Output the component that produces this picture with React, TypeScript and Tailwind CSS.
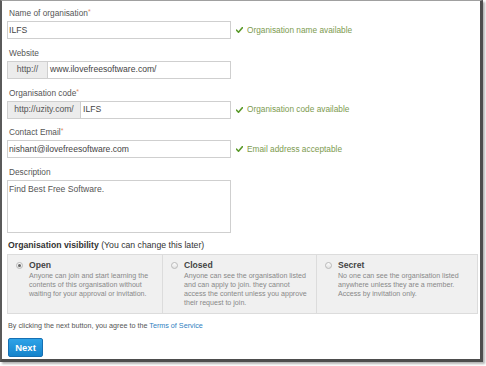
import React from "react";

const Check = () => (
  <svg width="7" height="6" viewBox="0 0 7 6" className="shrink-0">
    <path d="M0.6 3.2 L2.5 5.2 L6.5 0.6" fill="none" stroke="#5b9a2b" strokeWidth="1.6" strokeLinecap="round" strokeLinejoin="round" />
  </svg>
);

const Label = ({ children, req }: { children: React.ReactNode; req?: boolean }) => (
  <div className="h-[12px] leading-[12px] pl-[2px] mb-[2px] text-[8.3px] text-[#555]">
    {children}
    {req && <span className="text-[#e58a5c] text-[7px] align-top leading-[9px]">*</span>}
  </div>
);

const Status = ({ text }: { text: string }) => (
  <div className="flex items-center ml-[5px] gap-[4px]">
    <Check />
    <span className="text-[8.3px] text-[#7d9b4f]">{text}</span>
  </div>
);

const Radio = ({ on }: { on?: boolean }) => (
  <div className="w-[7px] h-[7px] mt-[1.5px] rounded-full border border-[#b9b9b9] bg-gradient-to-b from-[#fdfdfd] to-[#e2e2e2] flex items-center justify-center shrink-0">
    {on && <div className="w-[3px] h-[3px] rounded-full bg-[#666]" />}
  </div>
);

const Option = ({ title, lines, on, border }: { title: string; lines: string[]; on?: boolean; border?: boolean }) => (
  <div className={`flex pl-[8px] pt-[5px] gap-[6px] ${border ? "border-l border-[#dcdcdc]" : ""}`}>
    <Radio on={on} />
    <div>
      <div className="text-[8.6px] font-bold text-[#444] leading-[10px] mb-[2px]">{title}</div>
      {lines.map((l, i) => (
        <div key={i} className="text-[7.1px] text-[#888] leading-[9px] whitespace-nowrap">{l}</div>
      ))}
    </div>
  </div>
);

export default function App() {
  return (
    <div className="w-[486px] h-[366px] bg-white font-['Liberation_Sans',Arial,sans-serif] overflow-hidden">
      <div className="w-[483px] h-[362px] bg-white border-l-2 border-l-[#5a5a5a] border-t border-t-[#a0a0a0] border-r-[3px] border-r-[#4d4d4d] border-b-[3px] border-b-[#4d4d4d] shadow-[2px_2px_2px_rgba(0,0,0,0.3)] pl-[5px] pt-[6px]">
        {/* Name */}
        <div className="mb-[7.8px]">
          <Label req>Name of organisation</Label>
          <div className="flex items-center">
            <div className="w-[224px] h-[18px] border border-[#cfcfcf] pl-[1px] flex items-center text-[8.6px] text-[#444]">ILFS</div>
            <Status text="Organisation name available" />
          </div>
        </div>
        {/* Website */}
        <div className="mb-[7.8px]">
          <Label>Website</Label>
          <div className="flex items-center">
            <div className="w-[224px] h-[18px] border border-[#cfcfcf] flex text-[8.6px]">
              <div className="w-[40px] bg-[#ececec] border-r border-[#cfcfcf] flex items-center justify-center text-[#555]">http://</div>
              <div className="flex items-center pl-[2px] text-[#444]">www.ilovefreesoftware.com/</div>
            </div>
          </div>
        </div>
        {/* Code */}
        <div className="mb-[7.8px]">
          <Label req>Organisation code</Label>
          <div className="flex items-center">
            <div className="w-[224px] h-[18px] border border-[#cfcfcf] flex text-[8.6px]">
              <div className="w-[73px] bg-[#ececec] border-r border-[#cfcfcf] flex items-center justify-center text-[#555]">http://uzity.com/</div>
              <div className="flex items-center pl-[2px] text-[#444]">ILFS</div>
            </div>
            <Status text="Organisation code available" />
          </div>
        </div>
        {/* Email */}
        <div className="mb-[7.8px]">
          <Label req>Contact Email</Label>
          <div className="flex items-center">
            <div className="w-[224px] h-[18px] border border-[#cfcfcf] pl-[1px] flex items-center text-[8.6px] text-[#444]">nishant@ilovefreesoftware.com</div>
            <Status text="Email address acceptable" />
          </div>
        </div>
        {/* Description */}
        <div>
          <Label>Description</Label>
          <div className="w-[224px] h-[53px] border border-[#cfcfcf] pl-[1px] pt-[3px] text-[8.6px] text-[#555] leading-[10px]">Find Best Free Software.</div>
        </div>
        {/* Visibility */}
        <div className="mt-[5.5px] mb-[3.5px] h-[12px] leading-[12px] text-[8.7px] text-[#333] pl-[1px]">
          <span className="font-bold">Organisation visibility</span> (You can change this later)
        </div>
        <div className="w-[471px] h-[60px] bg-[#f0f0f0] border border-[#dcdcdc] grid grid-cols-[154px_154px_1fr]">
          <Option
            on
            title="Open"
            lines={["Anyone can join and start learning the", "contents of this organisation without", "waiting for your approval or invitation."]}
          />
          <Option
            border
            title="Closed"
            lines={["Anyone can see the organisation listed", "and can apply to join. they cannot", "access the content unless you approve", "their request to join."]}
          />
          <Option
            border
            title="Secret"
            lines={["No one can see the organisation listed", "anywhere unless they are a member.", "Access by invitation only."]}
          />
        </div>
        <div className="mt-[7px] h-[10px] leading-[10px] text-[7.2px] text-[#555] pl-[1px]">
          By clicking the next button, you agree to the <span className="text-[#2f7fc1]">Terms of Service</span>
        </div>
        <div className="mt-[7px] ml-[1px] w-[35px] h-[19px] rounded-[2px] border border-[#1670b3] bg-gradient-to-b from-[#2ea3e8] to-[#1483cb] flex items-center justify-center text-white font-bold text-[9.5px]">
          Next
        </div>
      </div>
    </div>
  );
}
